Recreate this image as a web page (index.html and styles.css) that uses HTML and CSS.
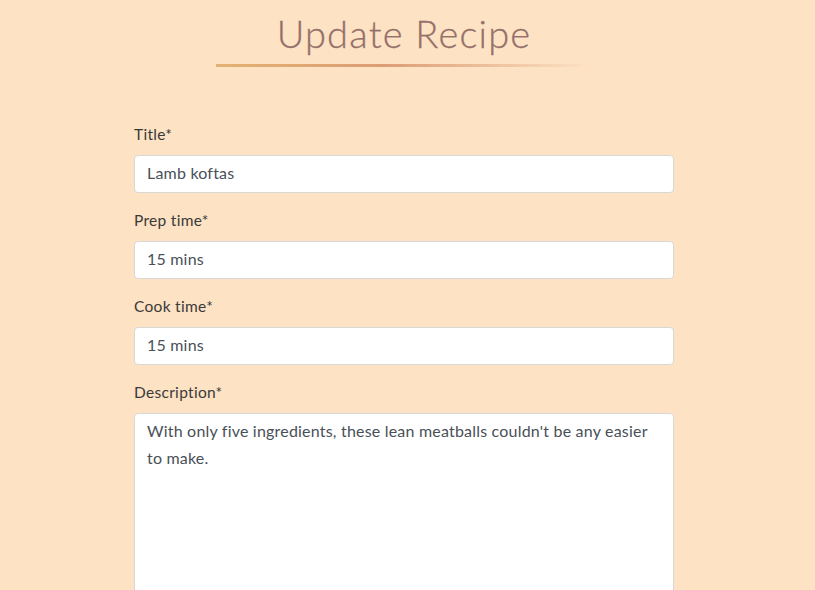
FILE: index.html
```html
<!DOCTYPE html>
<html lang="en">
<head>
<meta charset="utf-8">
<title>Update Recipe</title>
<link rel="stylesheet" href="styles.css">
</head>
<body>
<header class="page-head">
  <h1 class="page-title">Update Recipe</h1>
  <div class="title-rule"></div>
</header>
<form class="recipe-form">
  <div class="form-group">
    <label class="form-label" for="title">Title*</label>
    <input class="form-control" id="title" type="text" value="Lamb koftas">
  </div>
  <div class="form-group">
    <label class="form-label" for="prep">Prep time*</label>
    <input class="form-control" id="prep" type="text" value="15 mins">
  </div>
  <div class="form-group">
    <label class="form-label" for="cook">Cook time*</label>
    <input class="form-control" id="cook" type="text" value="15 mins">
  </div>
  <div class="form-group">
    <label class="form-label" for="desc">Description*</label>
    <textarea class="form-control form-textarea" id="desc">With only five ingredients, these lean meatballs couldn't be any easier to make.</textarea>
  </div>
</form>
</body>
</html>
```
FILE: styles.css
```css
html, body {
  margin: 0;
  padding: 0;
}
body {
  background: #fde2c3;
  font-family: "Lato", "Liberation Sans", sans-serif;
  font-size: 16px;
  line-height: 1.5;
  color: #3a3a3a;
  overflow: hidden;
}
.page-head {
  display: flex;
  flex-direction: column;
  align-items: center;
  padding-top: 10px;
}
.page-title {
  margin: 0 7px 0 0;
  font-size: 38px;
  font-weight: 300;
  line-height: 46px;
  color: #94706b;
  letter-spacing: 1.2px;
  -webkit-text-stroke: 0.3px #94706b;
}
.title-rule {
  width: 373px;
  height: 3px;
  margin-top: 8px;
  margin-left: -10px;
  background: linear-gradient(90deg, #e3b271 0%, #dc9d75 45%, rgba(253,226,195,0) 100%);
}
.recipe-form {
  width: 540px;
  margin-left: 134px;
  padding-top: 55px;
}
.form-group {
  margin-bottom: 15px;
}
.form-label {
  display: block;
  margin-bottom: 9px;
  font-size: 15.5px;
  letter-spacing: 0.3px;
  line-height: 24px;
  color: #3a3a3a;
}
.form-control {
  display: block;
  box-sizing: border-box;
  width: 100%;
  height: 38px;
  padding: 4px 12px 8px;
  font-family: inherit;
  font-size: 16px;
  letter-spacing: 0.2px;
  line-height: 24px;
  color: #495057;
  background: #fff;
  border: 1px solid #d8d8d8;
  border-radius: 4px;
  outline: none;
}
.form-textarea {
  height: 240px;
  resize: none;
  line-height: 27px;
  padding-top: 3px;
  padding-right: 20px;
}
```
